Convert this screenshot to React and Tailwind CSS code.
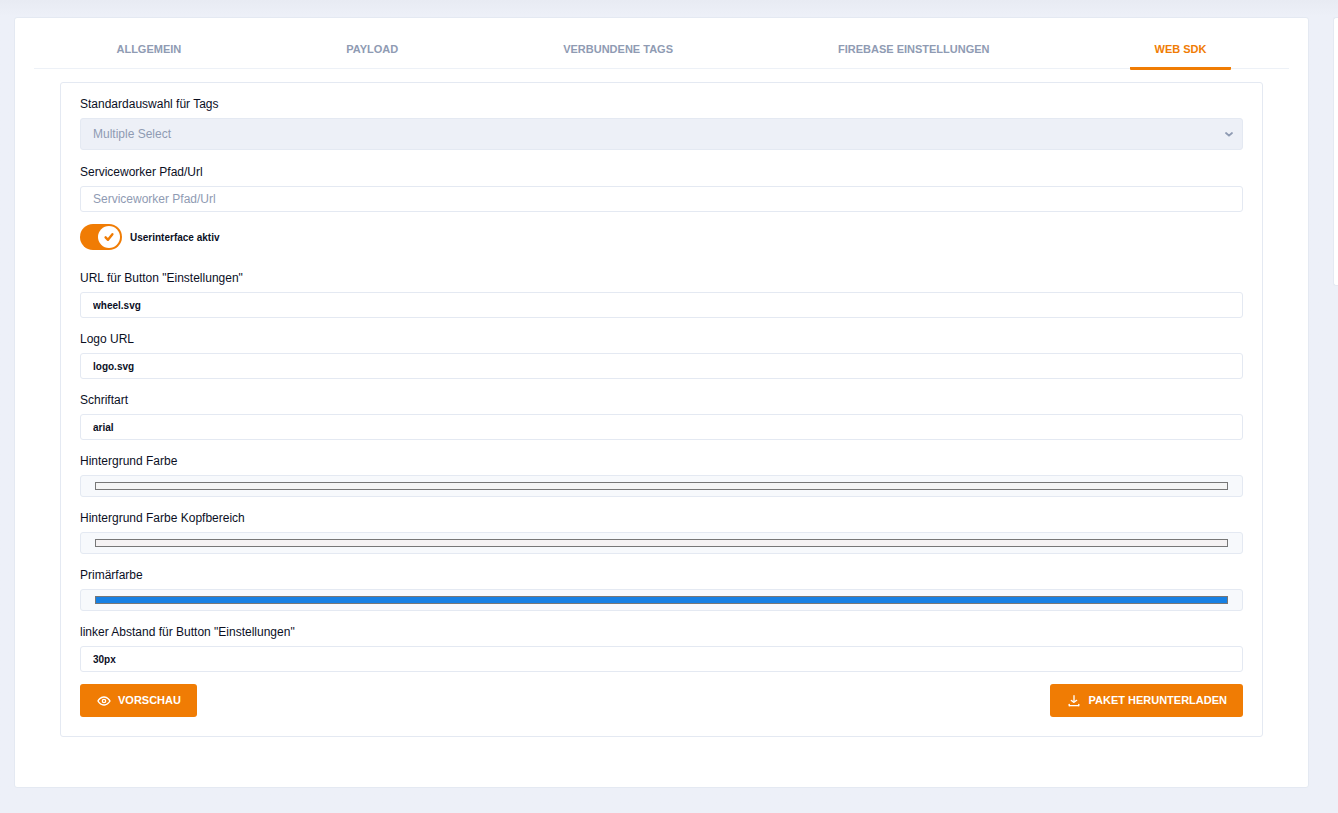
import React, { useState } from "react";

const TABS = [
  "Allgemein",
  "Payload",
  "Verbundene Tags",
  "Firebase Einstellungen",
  "Web SDK",
];

const EyeIcon = () => (
  <svg className="size-4" viewBox="0 0 24 24" fill="currentColor" aria-hidden="true">
    <path d="M21.87 11.5c-.64-1.11-4.16-6.68-10.14-6.5-5.53.14-8.73 5-9.6 6.5a1 1 0 0 0 0 1c.63 1.09 4 6.5 9.89 6.5h.25c5.53-.14 8.74-5 9.6-6.5a1 1 0 0 0 0-1zM12.22 17c-4.31.1-7.12-3.59-8-5 1-1.61 3.61-4.9 7.61-5 4.29-.11 7.11 3.59 8 5-1.03 1.61-3.61 4.9-7.61 5z" />
    <path d="M12 8.5a3.5 3.5 0 1 0 3.5 3.5A3.5 3.5 0 0 0 12 8.5zm0 5a1.5 1.5 0 1 1 1.5-1.5 1.5 1.5 0 0 1-1.5 1.5z" />
  </svg>
);

const DownloadIcon = () => (
  <svg className="size-4" viewBox="0 0 24 24" fill="currentColor" aria-hidden="true">
    <rect x="4" y="18" width="16" height="2" rx="1" />
    <rect x="3" y="17" width="4" height="2" rx="1" transform="rotate(-90 5 18)" />
    <rect x="17" y="17" width="4" height="2" rx="1" transform="rotate(-90 19 18)" />
    <path d="M12 15a1 1 0 0 1-.58-.18l-4-2.82a1 1 0 0 1-.24-1.39 1 1 0 0 1 1.4-.24L12 12.76l3.4-2.56a1 1 0 0 1 1.2 1.6l-4 3a1 1 0 0 1-.6.2z" />
    <path d="M12 13a1 1 0 0 1-1-1V4a1 1 0 0 1 2 0v8a1 1 0 0 1-1 1z" />
  </svg>
);

const Label = ({ id, children }) => (
  <label htmlFor={id} className="block mb-[5px] text-xs leading-[18px]">
    {children}
  </label>
);

const TextField = ({ id, label, ...props }) => (
  <div>
    <Label id={id}>{label}</Label>
    <input
      id={id}
      type="text"
      className="block w-full h-[26px] px-3 rounded-[3px] border border-[#e4e9f2] bg-white text-[10px] font-bold outline-none placeholder:text-xs placeholder:font-normal placeholder:text-[#8f9bb3] focus:border-[#f07c04]"
      {...props}
    />
  </div>
);

const ColorField = ({ id, label, value }) => (
  <div>
    <Label id={id}>{label}</Label>
    <input
      id={id}
      type="color"
      defaultValue={value}
      className="block w-full h-[22px] px-3 py-[2px] rounded-[3px] border border-[#e4e9f2] bg-[#f7f9fc]"
    />
  </div>
);

const Button = ({ icon, children }) => (
  <button
    type="button"
    className="inline-flex items-center gap-[6px] h-[33px] px-4 rounded-[3px] bg-[#f07c04] text-white text-[11px] font-bold uppercase hover:bg-[#f99437] transition-colors"
  >
    {icon}
    {children}
  </button>
);

const Tabs = ({ active, onSelect }) => (
  <nav className="mx-[19px] flex justify-around border-b border-[#edf1f7]">
    {TABS.map((tab) => (
      <button
        key={tab}
        type="button"
        onClick={() => onSelect(tab)}
        className={`-mb-[2px] h-[52px] pt-[14px] px-[25px] border-b-[3px] rounded-[1px] text-[11px] font-bold uppercase ${
          active === tab
            ? "border-[#f07c04] text-[#f07c04]"
            : "border-transparent text-[#8f9bb3]"
        }`}
      >
        {tab}
      </button>
    ))}
  </nav>
);

const WebSdkForm = () => (
  <form className="mx-[45px] mt-[13px] px-[19px] pt-3 pb-[19px] rounded-[3px] border border-[#e4e9f2]">
    <Label id="tags">Standardauswahl für Tags</Label>
    <div className="relative mb-[13px]">
      <select
        id="tags"
        className="block w-full h-8 px-3 rounded-[3px] border border-[#e4e9f2] bg-[#edf0f7] text-xs text-[#8f9bb3] appearance-none outline-none"
      >
        <option>Multiple Select</option>
      </select>
      <svg
        className="absolute right-[9px] top-[11px] w-[10px] h-[10px] text-[#8f9bb3] pointer-events-none"
        viewBox="0 0 10 10"
        fill="none"
        stroke="currentColor"
        strokeWidth="1.8"
        strokeLinecap="round"
        strokeLinejoin="round"
        aria-hidden="true"
      >
        <path d="M2 4l3 2.7L8 4" />
      </svg>
    </div>

    <TextField
      id="serviceworker"
      label="Serviceworker Pfad/Url"
      placeholder="Serviceworker Pfad/Url"
    />

    {/* Toggle */}
    <label className="mt-3 mb-[19px] flex w-fit items-center gap-2 text-[10px] font-bold">
      <span className="relative block w-[42px] h-[26px]">
        <input
          type="checkbox"
          defaultChecked
          className="peer block size-full rounded-full bg-[#edf1f7] checked:bg-[#f07c04] appearance-none"
        />
        <span className="absolute top-[2px] left-[2px] peer-checked:left-[18px] grid place-items-center size-[22px] rounded-full bg-white text-[#f07c04] pointer-events-none">
          <svg
            className="size-[12px]"
            viewBox="0 0 12 12"
            fill="none"
            stroke="currentColor"
            strokeWidth="2.4"
            strokeLinecap="round"
            strokeLinejoin="round"
            aria-hidden="true"
          >
            <path d="M2.6 6.3l2.4 2.5L9.4 3.3" />
          </svg>
        </span>
      </span>
      Userinterface aktiv
    </label>

    <div className="flex flex-col gap-3">
      <TextField
        id="settings-url"
        label={'URL für Button "Einstellungen"'}
        defaultValue="wheel.svg"
      />
      <TextField id="logo-url" label="Logo URL" defaultValue="logo.svg" />
      <TextField id="font" label="Schriftart" defaultValue="arial" />
      <ColorField id="background" label="Hintergrund Farbe" value="#f5f5f5" />
      <ColorField
        id="header-background"
        label="Hintergrund Farbe Kopfbereich"
        value="#f5f2f3"
      />
      <ColorField id="primary" label="Primärfarbe" value="#1680e3" />
      <TextField
        id="settings-left"
        label={'linker Abstand für Button "Einstellungen"'}
        defaultValue="30px"
      />
      <div className="flex justify-between">
        <Button icon={<EyeIcon />}>Vorschau</Button>
        <Button icon={<DownloadIcon />}>Paket herunterladen</Button>
      </div>
    </div>
  </form>
);

const App = () => {
  const [activeTab, setActiveTab] = useState("Web SDK");

  return (
    <div className="min-h-screen overflow-hidden bg-[#edf0f8] bg-linear-to-b from-[#e8ebf3] to-[#edf0f8] to-[16px] pt-[17px] pb-[25px] pl-[14px] text-[#0b0f1f] font-['Liberation_Sans',Arial,sans-serif]">
      <div className="flex items-start gap-6">
        <main className="flex-1 min-w-0 pb-[50px] rounded-[3px] border border-[#e4e9f2] bg-white">
          <Tabs active={activeTab} onSelect={setActiveTab} />
          <WebSdkForm />
        </main>
        <aside className="flex-none w-[5px] h-[269px] rounded-l-[3px] border border-r-0 border-[#e4e9f2] bg-white" />
      </div>
    </div>
  );
};

export default App;
